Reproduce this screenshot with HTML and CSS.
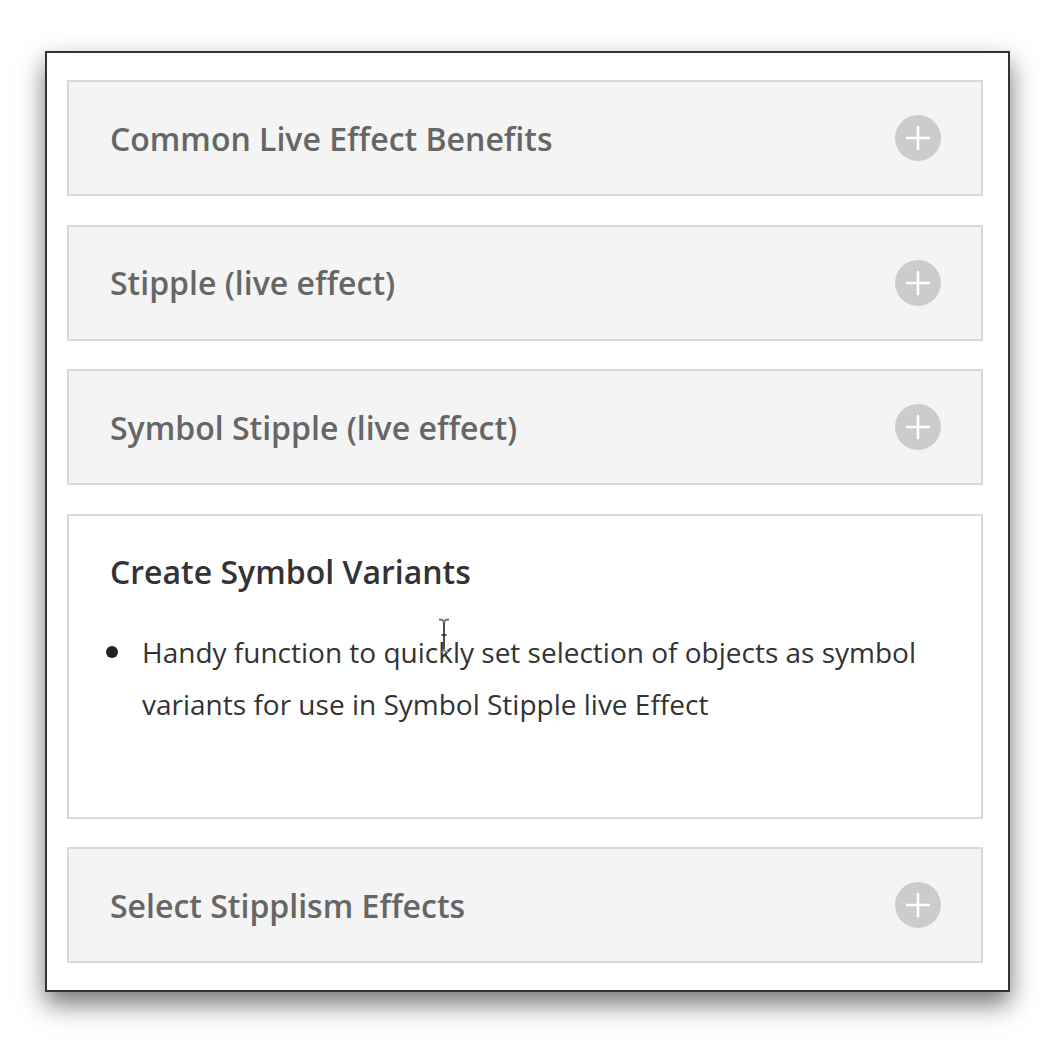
FILE: index.html
```html
<!DOCTYPE html>
<html lang="en">
<head>
<meta charset="utf-8">
<title>Stipplism accordion</title>
<link rel="stylesheet" href="styles.css">
</head>
<body>
<div class="window">
  <div class="accordion">
    <div class="item">
      <div class="header">
        <span class="title">Common Live Effect Benefits</span>
        <svg class="plus" width="46" height="46" viewBox="0 0 46 46"><circle cx="23" cy="23" r="23" fill="#cccccc"/><path d="M12 23H34M23 12V34" stroke="#fff" stroke-width="2.6" stroke-linecap="round"/></svg>
      </div>
    </div>
    <div class="item">
      <div class="header">
        <span class="title">Stipple (live effect)</span>
        <svg class="plus" width="46" height="46" viewBox="0 0 46 46"><circle cx="23" cy="23" r="23" fill="#cccccc"/><path d="M12 23H34M23 12V34" stroke="#fff" stroke-width="2.6" stroke-linecap="round"/></svg>
      </div>
    </div>
    <div class="item">
      <div class="header">
        <span class="title">Symbol Stipple (live effect)</span>
        <svg class="plus" width="46" height="46" viewBox="0 0 46 46"><circle cx="23" cy="23" r="23" fill="#cccccc"/><path d="M12 23H34M23 12V34" stroke="#fff" stroke-width="2.6" stroke-linecap="round"/></svg>
      </div>
    </div>
    <div class="item open">
      <div class="header">
        <span class="title">Create Symbol Variants</span>
      </div>
      <div class="body">
        <ul class="list">
          <li>Handy function to quickly set selection of objects as symbol variants for use in Symbol Stipple live Effect</li>
        </ul>
        <svg class="cursor" width="14" height="36" viewBox="0 0 14 36"><path d="M7 5V31M4.5 17H9.5" fill="none" stroke="#222" stroke-width="1.6"/><path d="M3 34Q7 34 7 31Q7 34 11 34" fill="none" stroke="#888" stroke-width="1.4"/><path d="M2 1.5Q7 1.5 7 5Q7 1.5 12 1.5" fill="none" stroke="#777" stroke-width="2.2"/></svg>
      </div>
    </div>
    <div class="item">
      <div class="header">
        <span class="title">Select Stipplism Effects</span>
        <svg class="plus" width="46" height="46" viewBox="0 0 46 46"><circle cx="23" cy="23" r="23" fill="#cccccc"/><path d="M12 23H34M23 12V34" stroke="#fff" stroke-width="2.6" stroke-linecap="round"/></svg>
      </div>
    </div>
  </div>
</div>
</body>
</html>
```
FILE: styles.css
```css
html, body {
  margin: 0;
  padding: 0;
  background: #ffffff;
}
body {
  padding: 51px 0 52px 45px;
  font-family: "Open Sans", "Noto Sans", sans-serif;
}
.window {
  width: 961px;
  height: 937px;
  border: 2px solid #333333;
  background: #ffffff;
  box-shadow: 0 12px 24px rgba(0, 0, 0, 0.55);
}
.accordion {
  display: flex;
  flex-direction: column;
  gap: 28.5px;
  padding: 27px 25px 0 20px;
}
.item {
  border: 2px solid #d9d9d9;
  background: #f4f4f4;
}
.item.open {
  background: #ffffff;
}
.header {
  height: 112px;
  display: flex;
  align-items: center;
  justify-content: space-between;
  padding: 0 40px 0 41px;
}
.title {
  font-size: 32px;
  font-weight: 600;
  color: #666666;
}
.open .title {
  color: #333333;
}
.plus {
  display: block;
  flex: none;
}
.body {
  position: relative;
  padding: 0 41px 87px 41px;
}
.list {
  margin: -2px 0 0 0;
  padding: 0 0 0 32px;
  list-style: none;
  font-size: 28px;
  line-height: 52px;
  color: #333333;
}
.list li {
  position: relative;
}
.list li::before {
  content: "";
  position: absolute;
  left: -36px;
  top: 20px;
  width: 12px;
  height: 12px;
  border-radius: 50%;
  background: #222222;
}
.cursor {
  position: absolute;
  left: 368px;
  top: -8px;
}
```
